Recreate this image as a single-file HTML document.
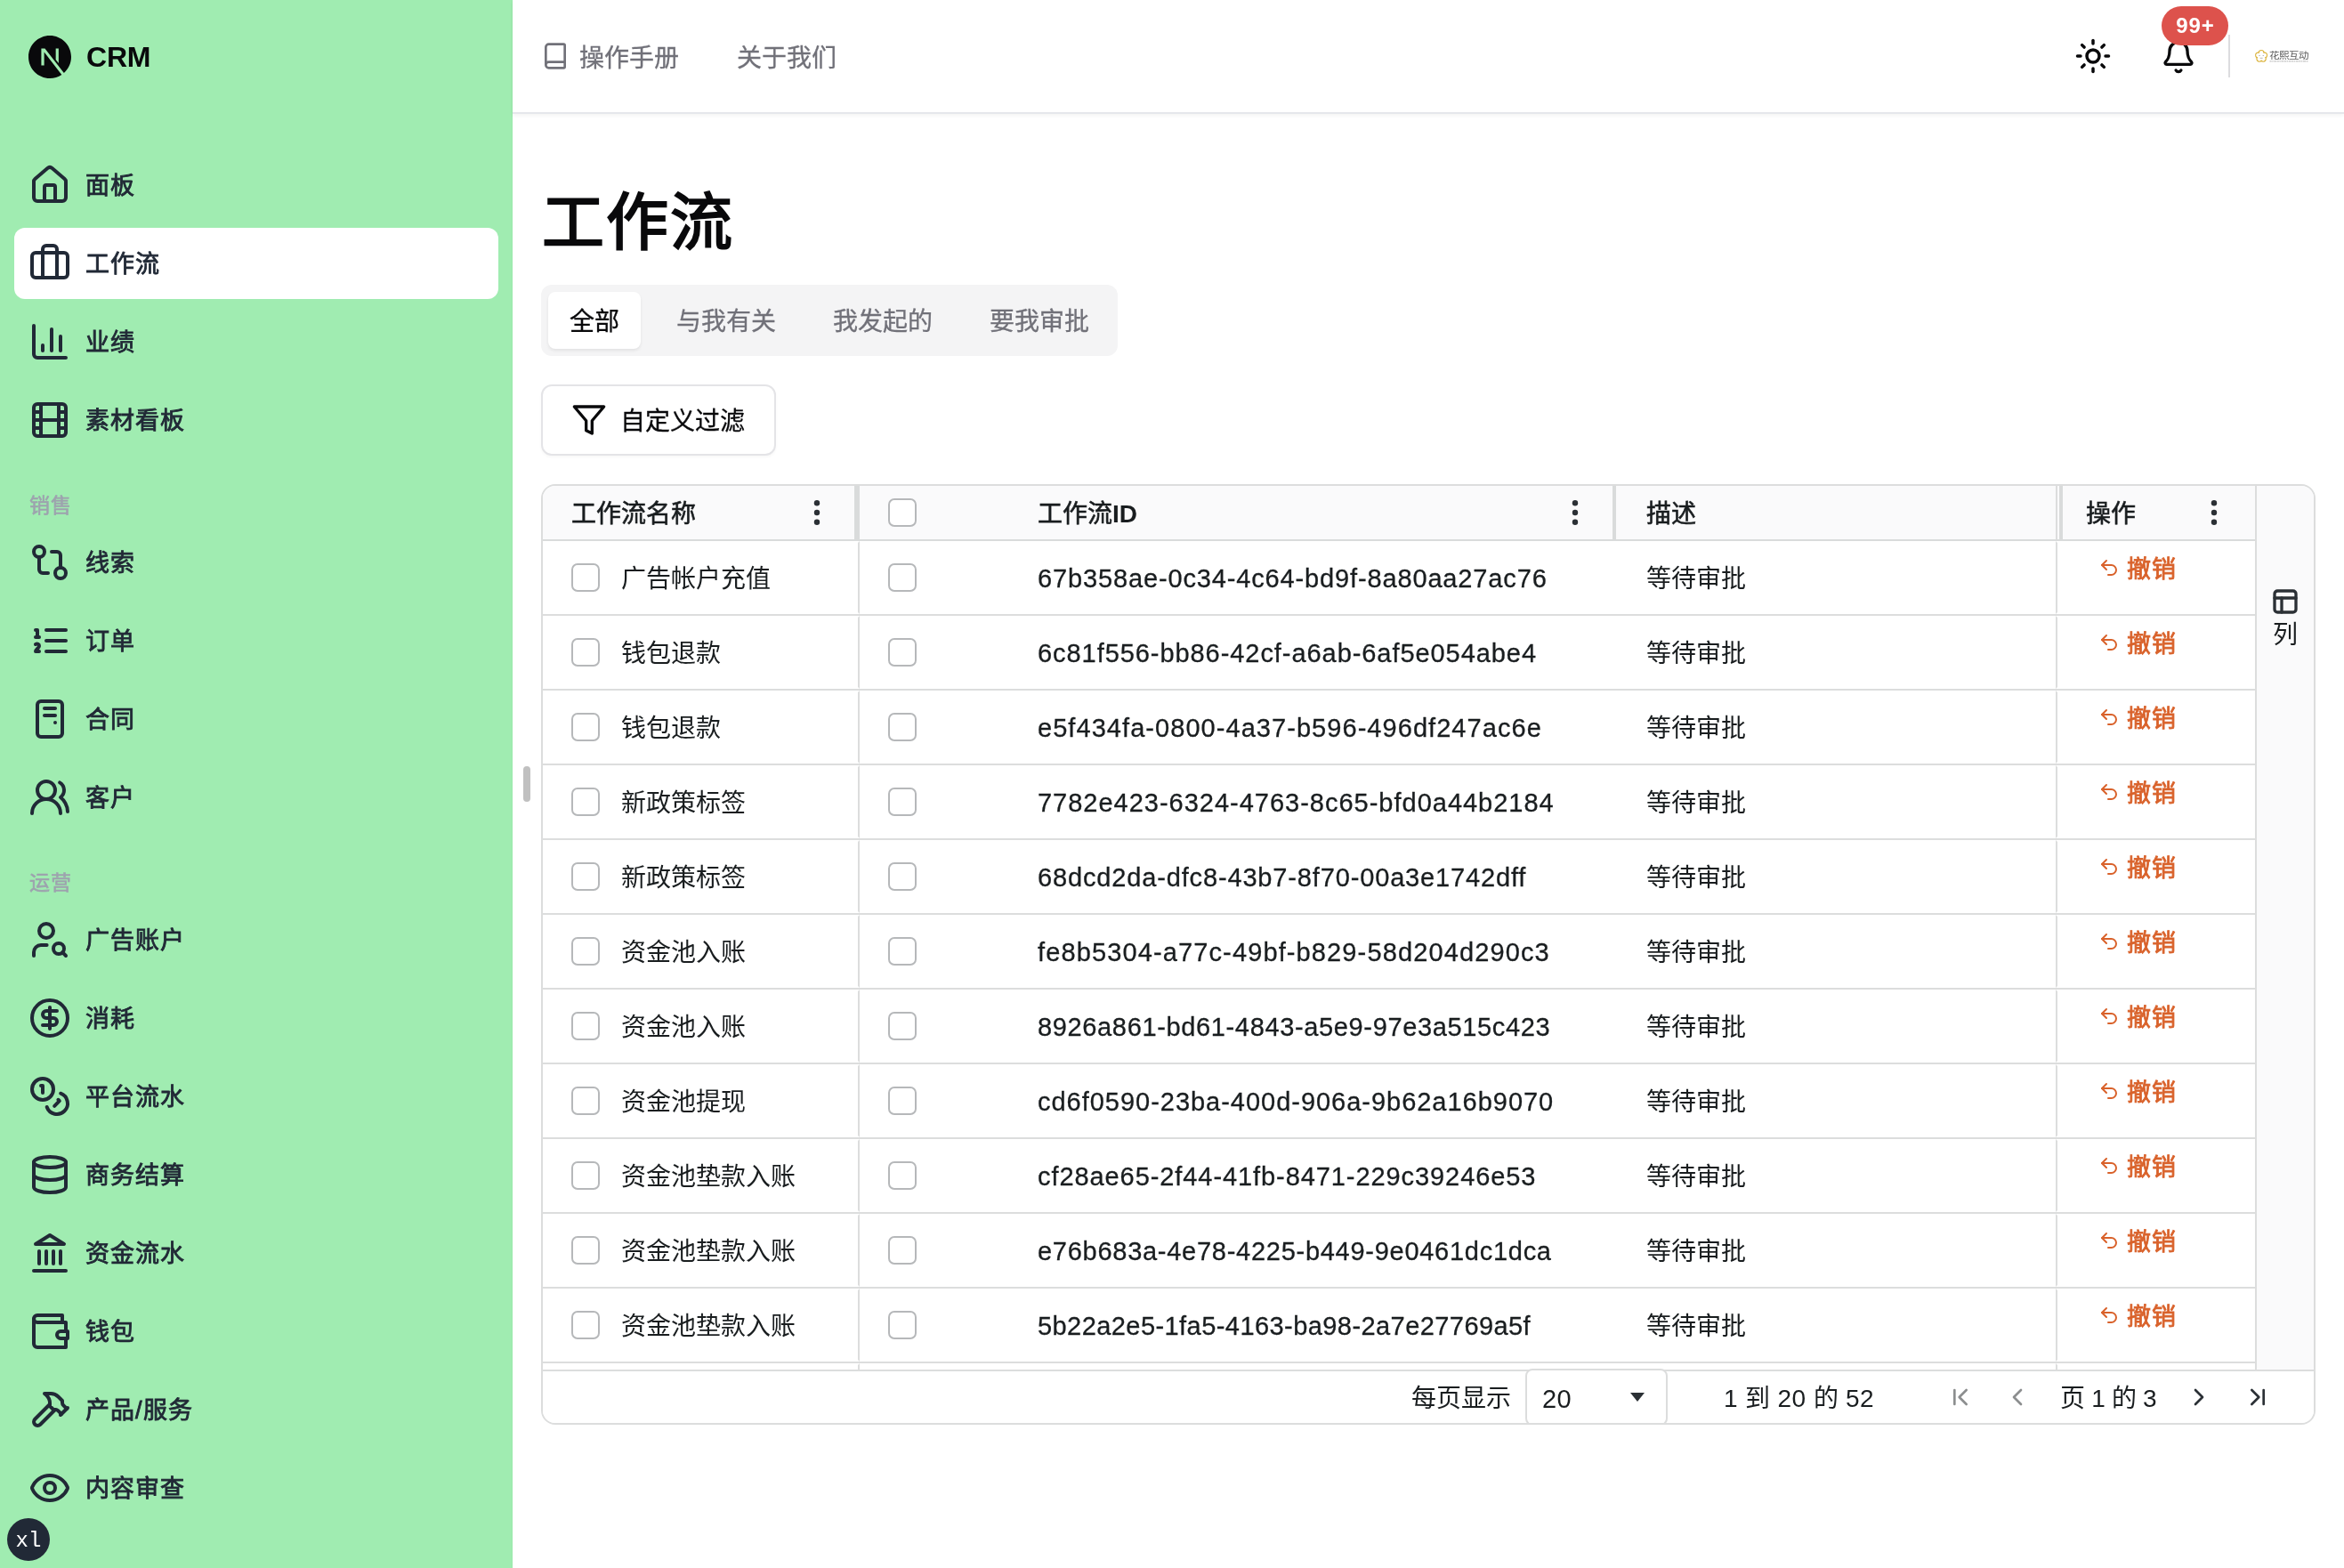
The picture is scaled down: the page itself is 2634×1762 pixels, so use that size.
<!DOCTYPE html>
<html lang="zh-CN">
<head>
<meta charset="utf-8">
<title>工作流 - CRM</title>
<style>
*{box-sizing:border-box}
html,body{margin:0;padding:0}
body{width:2634px;height:1762px;overflow:hidden;background:#fff;position:relative;
 font-family:"Liberation Sans",sans-serif;color:#09090b;-webkit-font-smoothing:antialiased}
svg.ic{display:block;flex:none}
a{color:inherit;text-decoration:none}
button{font:inherit;color:inherit;background:none;border:0;padding:0;margin:0;text-align:left;letter-spacing:inherit}
h1{margin:0}
#side,#top,#title,#tabs,#fbtn,#grid{will-change:transform}
/* ---------- sidebar ---------- */
#side{position:absolute;left:0;top:0;width:576px;height:1762px;background:#a0ecb1;color:#212936;box-shadow:inset -1px 0 0 #9aeaab}
#brand{position:absolute;left:32px;top:40px;height:48px;display:flex;align-items:center}
#brand .t{margin-left:17px;font-weight:700;font-size:32px;color:#09090b;letter-spacing:-.2px;line-height:48px}
#nav{position:absolute;left:16px;top:168px;width:544px}
.ni{height:80px;margin-bottom:8px;border-radius:12px;padding-left:16px;display:flex;align-items:center;
 font-size:27px;letter-spacing:1px;font-weight:500;-webkit-text-stroke:.85px currentColor;line-height:48px}
.ni.act{background:#fff}
.ni span{margin-left:16px;position:relative;top:1px}
.sec{height:32px;line-height:32px;margin:39px 0 9px 17px;padding-top:1px;font-size:23px;letter-spacing:1px;font-weight:400;-webkit-text-stroke:.6px currentColor;color:#9da3ae}
#xl{position:absolute;left:8px;top:1706px;width:48px;height:48px;border-radius:50%;background:#212936;color:#fff;
 font-family:"Liberation Mono",monospace;font-size:24px;line-height:48px;padding-top:2px;text-align:center}
#grip{position:absolute;left:588px;top:861px;width:8px;height:40px;border-radius:4px;background:#c0c0c0}
/* ---------- topbar ---------- */
#top{position:absolute;left:576px;top:0;width:2058px;height:128px;background:#fff;border-bottom:2px solid #e5e7eb;
 box-shadow:0 2px 4px rgba(0,0,0,.05)}
.tl{position:absolute;top:42px;height:48px;line-height:48px;font-size:28px;font-weight:400;-webkit-text-stroke:.3px currentColor;color:#717179;display:flex;align-items:center}

#book{position:absolute;left:32px;top:47px;color:#717179}
#sun{position:absolute;left:1755px;top:42px;color:#09090b}
#bell{position:absolute;left:1852px;top:44px;color:#09090b}
#badge{position:absolute;left:1853px;top:7px;width:75px;height:44px;border-radius:22px;background:#dd524c;color:#fff;
 font-size:24px;font-weight:700;line-height:44px;text-align:center;letter-spacing:1px;padding-left:1px}
#vsep{position:absolute;left:1928px;top:39px;width:2px;height:48px;background:#dcdcdf}
#logo{position:absolute;left:1954px;top:50px;width:70px;height:26px}
/* ---------- page ---------- */
#title{position:absolute;left:609px;top:199px;height:104px;line-height:104px;font-size:70px;letter-spacing:2px;font-weight:700;color:#09090b;white-space:nowrap}
#tabs{position:absolute;left:608px;top:320px;width:648px;height:80px;border-radius:12px;background:#f4f4f5}
.tab{position:absolute;top:8px;height:64px;padding-top:4px;line-height:60px;font-size:28px;font-weight:400;-webkit-text-stroke:.3px currentColor;color:#717179;text-align:center;border-radius:8px;white-space:nowrap}
.tab.on{background:#fff;color:#09090b;box-shadow:0 2px 4px rgba(0,0,0,.05),0 2px 3px rgba(0,0,0,.03)}
#fbtn{position:absolute;left:608px;top:432px;width:264px;height:80px;border:2px solid #e4e4e7;border-radius:12px;background:#fff;
 box-shadow:0 2px 3px rgba(0,0,0,.03)}
#fbtn svg{position:absolute;left:32px;top:18px}
#fbtn span{position:absolute;left:87px;top:2px;line-height:76px;font-size:28px;font-weight:400;-webkit-text-stroke:.3px currentColor;white-space:nowrap}
/* ---------- grid ---------- */
#grid{position:absolute;left:608px;top:544px;width:1994px;height:1057px;border:2px solid #dcdddd;border-radius:16px;overflow:hidden;background:#fff;color:#191d1f;font-size:28px}
#gh{position:absolute;left:0;top:0;width:1924px;height:62px;background:#fafafb;border-bottom:2px solid #d9dbdb;font-weight:400;-webkit-text-stroke:.6px currentColor;white-space:nowrap}
#gh .ht{position:absolute;top:2px;line-height:60px}
.bar{position:absolute;top:0;height:60px;background:#d9dbdb}
.dots{position:absolute;top:14px;width:32px;height:32px;color:#2b3035}
.cb{position:absolute;width:32px;height:32px;border:2px solid #b6b8ba;border-radius:7px;background:#fff}
.row{position:absolute;left:0;width:1924px;height:84px;border-bottom:2px solid #dcdddd;white-space:nowrap}
.row .c{position:absolute;top:0;height:82px;border:2px solid transparent}
.row .c1{left:0;width:356px;border-right-color:#dcdddd}
.row .c3{left:1700px;width:224px;border-left-color:#dcdddd}
.row .t{position:absolute;top:2px;line-height:82px}
.row .id{top:1px;font-size:29px;letter-spacing:.9px;-webkit-text-stroke:.3px currentColor}
.undo{position:absolute;left:1748px;top:18px;color:#d9622b}
.undo svg{position:absolute;left:0;top:0}
.undo span{position:absolute;left:32px;top:-10px;line-height:48px;font-weight:400;-webkit-text-stroke:.85px currentColor;font-size:27px;letter-spacing:1px}
#gs{position:absolute;left:1924px;top:0;width:66px;height:993px;background:#fafafb;border-left:2px solid #dcdddd}
#gs svg{position:absolute;left:16px;top:114px;color:#2b3035}
#gs span{position:absolute;left:0;width:64px;top:148px;line-height:40px;text-align:center;font-size:28px}
#gp{position:absolute;left:0;top:993px;width:1990px;height:60px;border-top:2px solid #dcdddd;background:#fff;white-space:nowrap}
#gp .pt{position:absolute;top:1px;line-height:60px}
#sel{position:absolute;left:1104px;top:-3px;width:160px;height:64px;border:2px solid #dcdddd;border-radius:8px;background:#fff}
#car{position:absolute;left:1221.5px;top:23.500px;width:0;height:0;border-left:8.500px solid transparent;border-right:8.500px solid transparent;border-top:10.500px solid #2b3035}
.pi{position:absolute;top:13px;width:32px;height:32px}
</style>
</head>
<body>
<aside id="side">
<div id="brand"><svg width="48" height="48" viewBox="0 0 24 24" style="display:block"><path fill="#09090b" d="M18.665 21.978C16.758 23.255 14.465 24 12 24 5.377 24 0 18.623 0 12S5.377 0 12 0s12 5.377 12 12c0 3.583-1.574 6.801-4.067 9.001L9.219 7.2H7.2v9.596h1.615V9.251l9.85 12.727Zm-3.332-8.533 1.6 2.061V7.2h-1.6v6.245Z"/></svg><div class="t">CRM</div></div>
<nav id="nav">
<a href="#" class="ni"><svg class="ic " width="48" height="48" viewBox="0 0 24 24" fill="none" stroke="currentColor" stroke-width="2" stroke-linecap="round" stroke-linejoin="round" style=""><path d="M15 21v-8a1 1 0 0 0-1-1h-4a1 1 0 0 0-1 1v8"/><path d="M3 10a2 2 0 0 1 .709-1.528l7-5.999a2 2 0 0 1 2.582 0l7 5.999A2 2 0 0 1 21 10v9a2 2 0 0 1-2 2H5a2 2 0 0 1-2-2z"/></svg><span>面板</span></a>
<a href="#" class="ni act"><svg class="ic " width="48" height="48" viewBox="0 0 24 24" fill="none" stroke="currentColor" stroke-width="2" stroke-linecap="round" stroke-linejoin="round" style=""><path d="M16 20V4a2 2 0 0 0-2-2h-4a2 2 0 0 0-2 2v16"/><rect width="20" height="14" x="2" y="6" rx="2"/></svg><span>工作流</span></a>
<a href="#" class="ni"><svg class="ic " width="48" height="48" viewBox="0 0 24 24" fill="none" stroke="currentColor" stroke-width="2" stroke-linecap="round" stroke-linejoin="round" style=""><path d="M3 3v16a2 2 0 0 0 2 2h16"/><path d="M18 17V9"/><path d="M13 17V5"/><path d="M8 17v-3"/></svg><span>业绩</span></a>
<a href="#" class="ni"><svg class="ic " width="48" height="48" viewBox="0 0 24 24" fill="none" stroke="currentColor" stroke-width="2" stroke-linecap="round" stroke-linejoin="round" style=""><rect width="18" height="18" x="3" y="3" rx="2"/><path d="M7 3v18"/><path d="M3 7.5h4"/><path d="M3 12h18"/><path d="M3 16.5h4"/><path d="M17 3v18"/><path d="M17 7.5h4"/><path d="M17 16.5h4"/></svg><span>素材看板</span></a>
<div class="sec">销售</div>
<a href="#" class="ni"><svg class="ic " width="48" height="48" viewBox="0 0 24 24" fill="none" stroke="currentColor" stroke-width="2" stroke-linecap="round" stroke-linejoin="round" style=""><circle cx="18" cy="18" r="3"/><circle cx="6" cy="6" r="3"/><path d="M13 6h3a2 2 0 0 1 2 2v7"/><path d="M11 18H8a2 2 0 0 1-2-2V9"/></svg><span>线索</span></a>
<a href="#" class="ni"><svg class="ic " width="48" height="48" viewBox="0 0 24 24" fill="none" stroke="currentColor" stroke-width="2" stroke-linecap="round" stroke-linejoin="round" style=""><line x1="10" x2="21" y1="6" y2="6"/><line x1="10" x2="21" y1="12" y2="12"/><line x1="10" x2="21" y1="18" y2="18"/><path d="M4 6h1v4"/><path d="M4 10h2"/><path d="M6 18H4c0-1 2-2 2-3s-1-1.5-2-1"/></svg><span>订单</span></a>
<a href="#" class="ni"><svg class="ic " width="48" height="48" viewBox="0 0 24 24" fill="none" stroke="currentColor" stroke-width="2" stroke-linecap="round" stroke-linejoin="round" style=""><rect width="14" height="20" x="5" y="2" rx="2"/><path d="M15 14h.01"/><path d="M9 6h6"/><path d="M9 10h6"/></svg><span>合同</span></a>
<a href="#" class="ni"><svg class="ic " width="48" height="48" viewBox="0 0 24 24" fill="none" stroke="currentColor" stroke-width="2" stroke-linecap="round" stroke-linejoin="round" style=""><path d="M18 21a8 8 0 0 0-16 0"/><circle cx="10" cy="8" r="5"/><path d="M22 20c0-3.37-2-6.5-4-8a5 5 0 0 0-.45-8.3"/></svg><span>客户</span></a>
<div class="sec">运营</div>
<a href="#" class="ni"><svg class="ic " width="48" height="48" viewBox="0 0 24 24" fill="none" stroke="currentColor" stroke-width="2" stroke-linecap="round" stroke-linejoin="round" style=""><circle cx="10" cy="7" r="4"/><path d="M10.3 15H7a4 4 0 0 0-4 4v2"/><circle cx="17" cy="17" r="3"/><path d="m21 21-1.9-1.9"/></svg><span>广告账户</span></a>
<a href="#" class="ni"><svg class="ic " width="48" height="48" viewBox="0 0 24 24" fill="none" stroke="currentColor" stroke-width="2" stroke-linecap="round" stroke-linejoin="round" style=""><circle cx="12" cy="12" r="10"/><path d="M16 8h-6a2 2 0 1 0 0 4h4a2 2 0 1 1 0 4H8"/><path d="M12 18V6"/></svg><span>消耗</span></a>
<a href="#" class="ni"><svg class="ic " width="48" height="48" viewBox="0 0 24 24" fill="none" stroke="currentColor" stroke-width="2" stroke-linecap="round" stroke-linejoin="round" style=""><circle cx="8" cy="8" r="6"/><path d="M18.09 10.37A6 6 0 1 1 10.34 18"/><path d="M7 6h1v4"/><path d="m16.71 13.88.7.71-2.82 2.82"/></svg><span>平台流水</span></a>
<a href="#" class="ni"><svg class="ic " width="48" height="48" viewBox="0 0 24 24" fill="none" stroke="currentColor" stroke-width="2" stroke-linecap="round" stroke-linejoin="round" style=""><ellipse cx="12" cy="5" rx="9" ry="3"/><path d="M3 5V19A9 3 0 0 0 21 19V5"/><path d="M3 12A9 3 0 0 0 21 12"/></svg><span>商务结算</span></a>
<a href="#" class="ni"><svg class="ic " width="48" height="48" viewBox="0 0 24 24" fill="none" stroke="currentColor" stroke-width="2" stroke-linecap="round" stroke-linejoin="round" style=""><line x1="3" x2="21" y1="22" y2="22"/><line x1="6" x2="6" y1="18" y2="11"/><line x1="10" x2="10" y1="18" y2="11"/><line x1="14" x2="14" y1="18" y2="11"/><line x1="18" x2="18" y1="18" y2="11"/><polygon points="12 2 20 7 4 7"/></svg><span>资金流水</span></a>
<a href="#" class="ni"><svg class="ic " width="48" height="48" viewBox="0 0 24 24" fill="none" stroke="currentColor" stroke-width="2" stroke-linecap="round" stroke-linejoin="round" style=""><path d="M21 12V7H5a2 2 0 0 1 0-4h14v4"/><path d="M3 5v14a2 2 0 0 0 2 2h16v-5"/><path d="M18 12a2 2 0 0 0 0 4h4v-4Z"/></svg><span>钱包</span></a>
<a href="#" class="ni"><svg class="ic " width="48" height="48" viewBox="0 0 24 24" fill="none" stroke="currentColor" stroke-width="2" stroke-linecap="round" stroke-linejoin="round" style=""><path d="m15 12-8.373 8.373a1 1 0 1 1-3-3L12 9"/><path d="m18 15 4-4"/><path d="m21.5 11.5-1.914-1.914A2 2 0 0 1 19 8.172V7l-2.26-2.26a6 6 0 0 0-4.202-1.756L9 2.96l.92.82A6.18 6.18 0 0 1 12 8.4V10l2 2h1.172a2 2 0 0 1 1.414.586L18.5 14.5"/></svg><span>产品/服务</span></a>
<a href="#" class="ni"><svg class="ic " width="48" height="48" viewBox="0 0 24 24" fill="none" stroke="currentColor" stroke-width="2" stroke-linecap="round" stroke-linejoin="round" style=""><path d="M2.062 12.348a1 1 0 0 1 0-.696 10.75 10.75 0 0 1 19.876 0 1 1 0 0 1 0 .696 10.75 10.75 0 0 1-19.876 0"/><circle cx="12" cy="12" r="3"/></svg><span>内容审查</span></a>
</nav>
<div id="xl">xl</div>
</aside>
<header id="top">
<svg id="book" class="ic" width="32" height="32" viewBox="0 0 24 24" fill="none" stroke="currentColor" stroke-width="2" stroke-linecap="round" stroke-linejoin="round" style=""><path d="M4 19.5v-15A2.5 2.5 0 0 1 6.5 2H19a1 1 0 0 1 1 1v18a1 1 0 0 1-1 1H6.5a1 1 0 0 1 0-5H20"/></svg>
<a href="#" class="tl" style="left:75px">操作手册</a>
<a href="#" class="tl" style="left:252px">关于我们</a>
<svg id="sun" class="ic" width="42" height="42" viewBox="0 0 24 24" fill="none" stroke="currentColor" stroke-width="2" stroke-linecap="round" stroke-linejoin="round" style=""><circle cx="12" cy="12" r="4"/><path d="M12 2v2"/><path d="M12 20v2"/><path d="m4.93 4.93 1.41 1.41"/><path d="m17.66 17.66 1.41 1.41"/><path d="M2 12h2"/><path d="M20 12h2"/><path d="m6.34 17.66-1.41 1.41"/><path d="m19.07 4.93-1.41 1.41"/></svg>
<svg id="bell" class="ic" width="40" height="40" viewBox="0 0 24 24" fill="none" stroke="currentColor" stroke-width="2" stroke-linecap="round" stroke-linejoin="round" style=""><path d="M10.268 21a2 2 0 0 0 3.464 0"/><path d="M3.262 15.326A1 1 0 0 0 4 17h16a1 1 0 0 0 .74-1.673C19.41 13.956 18 12.499 18 8A6 6 0 0 0 6 8c0 4.499-1.411 5.956-2.738 7.326"/></svg>
<div id="badge">99+</div>
<div id="vsep"></div>
<svg id="logo" viewBox="0 0 70 26"><circle cx="11.10" cy="9.65" r="3.00" fill="none" stroke="#dcb540" stroke-width="1.3"/><circle cx="14.48" cy="12.10" r="3.00" fill="none" stroke="#dcb540" stroke-width="1.3"/><circle cx="13.19" cy="16.07" r="3.00" fill="none" stroke="#dcb540" stroke-width="1.3"/><circle cx="9.01" cy="16.07" r="3.00" fill="none" stroke="#dcb540" stroke-width="1.3"/><circle cx="7.72" cy="12.10" r="3.00" fill="none" stroke="#dcb540" stroke-width="1.3"/><circle cx="11.10" cy="9.65" r="2.38" fill="#fff"/><circle cx="14.48" cy="12.10" r="2.38" fill="#fff"/><circle cx="13.19" cy="16.07" r="2.38" fill="#fff"/><circle cx="9.01" cy="16.07" r="2.38" fill="#fff"/><circle cx="7.72" cy="12.10" r="2.38" fill="#fff"/><circle cx="11.10" cy="13.20" r="3.600" fill="#fff"/><circle cx="9.00" cy="12.50" r=".600" fill="#8a8a8a"/><circle cx="13.20" cy="12.50" r=".600" fill="#8a8a8a"/><path d="M9.60 15.30h3" stroke="#9a9a9a" stroke-width=".7" fill="none"/><text x="19.800" y="16.300" font-family="Liberation Sans, sans-serif" font-size="10.400" fill="#5a5a5a" textLength="44.500" lengthAdjust="spacingAndGlyphs">花熙互动</text><path d="M20.500 18.900h43" stroke="#c4c4c4" stroke-width="1.300" stroke-dasharray="2.200 .5 1.400 .6 3 .5" fill="none"/></svg>
</header>
<div id="grip"></div>
<h1 id="title">工作流</h1>
<div id="tabs" role="tablist"><button role="tab" class="tab on" style="left:8px;width:104px">全部</button><button role="tab" class="tab" style="left:128px;width:160px">与我有关</button><button role="tab" class="tab" style="left:304px;width:160px">我发起的</button><button role="tab" class="tab" style="left:480px;width:160px">要我审批</button></div>
<button id="fbtn"><svg class="ic " width="40" height="40" viewBox="0 0 24 24" fill="none" stroke="currentColor" stroke-width="2" stroke-linecap="round" stroke-linejoin="round" style=""><polygon points="22 3 2 3 10 12.46 10 19 14 21 14 12.46 22 3"/></svg><span>自定义过滤</span></button>
<div id="grid" role="grid">
<div id="gh" role="row"><div class="ht" style="left:32px">工作流名称</div><svg class="dots" style="left:292px" viewBox="0 0 32 32"><circle cx="16" cy="5.2" r="3.2" fill="currentColor"/><circle cx="16" cy="16" r="3.2" fill="currentColor"/><circle cx="16" cy="26.8" r="3.2" fill="currentColor"/></svg><div class="bar" style="left:350px;width:6px"></div><div class="cb" style="left:388px;top:14px"></div><div class="ht" style="left:556px">工作流<span style="font-weight:700;-webkit-text-stroke:0">ID</span></div><svg class="dots" style="left:1144px" viewBox="0 0 32 32"><circle cx="16" cy="5.2" r="3.2" fill="currentColor"/><circle cx="16" cy="16" r="3.2" fill="currentColor"/><circle cx="16" cy="26.8" r="3.2" fill="currentColor"/></svg><div class="bar" style="left:1202px;width:4px"></div><div class="ht" style="left:1240px">描述</div><div class="bar" style="left:1700px;width:2px;background:#dcdddd"></div><div class="bar" style="left:1704px;width:4px"></div><div class="ht" style="left:1734px">操作</div><svg class="dots" style="left:1862px" viewBox="0 0 32 32"><circle cx="16" cy="5.2" r="3.2" fill="currentColor"/><circle cx="16" cy="16" r="3.2" fill="currentColor"/><circle cx="16" cy="26.8" r="3.2" fill="currentColor"/></svg></div>
<div class="row" role="row" style="top:62px"><div class="c c1"></div><div class="c c3"></div><div class="cb" style="left:32px;top:25px"></div><div class="t" style="left:88px">广告帐户充值</div><div class="cb" style="left:388px;top:25px"></div><div class="t id" style="left:556px;letter-spacing:0.857px">67b358ae-0c34-4c64-bd9f-8a80aa27ac76</div><div class="t" style="left:1240px">等待审批</div><button class="undo"><svg class="ic " width="24" height="24" viewBox="0 0 24 24" fill="none" stroke="currentColor" stroke-width="2" stroke-linecap="round" stroke-linejoin="round" style=""><path d="M9 14 4 9l5-5"/><path d="M4 9h10.5a5.5 5.5 0 0 1 5.5 5.5a5.5 5.5 0 0 1-5.5 5.5H11"/></svg><span>撤销</span></button></div>
<div class="row" role="row" style="top:146px"><div class="c c1"></div><div class="c c3"></div><div class="cb" style="left:32px;top:25px"></div><div class="t" style="left:88px">钱包退款</div><div class="cb" style="left:388px;top:25px"></div><div class="t id" style="left:556px;letter-spacing:0.937px">6c81f556-bb86-42cf-a6ab-6af5e054abe4</div><div class="t" style="left:1240px">等待审批</div><button class="undo"><svg class="ic " width="24" height="24" viewBox="0 0 24 24" fill="none" stroke="currentColor" stroke-width="2" stroke-linecap="round" stroke-linejoin="round" style=""><path d="M9 14 4 9l5-5"/><path d="M4 9h10.5a5.5 5.5 0 0 1 5.5 5.5a5.5 5.5 0 0 1-5.5 5.5H11"/></svg><span>撤销</span></button></div>
<div class="row" role="row" style="top:230px"><div class="c c1"></div><div class="c c3"></div><div class="cb" style="left:32px;top:25px"></div><div class="t" style="left:88px">钱包退款</div><div class="cb" style="left:388px;top:25px"></div><div class="t id" style="left:556px;letter-spacing:1.054px">e5f434fa-0800-4a37-b596-496df247ac6e</div><div class="t" style="left:1240px">等待审批</div><button class="undo"><svg class="ic " width="24" height="24" viewBox="0 0 24 24" fill="none" stroke="currentColor" stroke-width="2" stroke-linecap="round" stroke-linejoin="round" style=""><path d="M9 14 4 9l5-5"/><path d="M4 9h10.5a5.5 5.5 0 0 1 5.5 5.5a5.5 5.5 0 0 1-5.5 5.5H11"/></svg><span>撤销</span></button></div>
<div class="row" role="row" style="top:314px"><div class="c c1"></div><div class="c c3"></div><div class="cb" style="left:32px;top:25px"></div><div class="t" style="left:88px">新政策标签</div><div class="cb" style="left:388px;top:25px"></div><div class="t id" style="left:556px;letter-spacing:0.991px">7782e423-6324-4763-8c65-bfd0a44b2184</div><div class="t" style="left:1240px">等待审批</div><button class="undo"><svg class="ic " width="24" height="24" viewBox="0 0 24 24" fill="none" stroke="currentColor" stroke-width="2" stroke-linecap="round" stroke-linejoin="round" style=""><path d="M9 14 4 9l5-5"/><path d="M4 9h10.5a5.5 5.5 0 0 1 5.5 5.5a5.5 5.5 0 0 1-5.5 5.5H11"/></svg><span>撤销</span></button></div>
<div class="row" role="row" style="top:398px"><div class="c c1"></div><div class="c c3"></div><div class="cb" style="left:32px;top:25px"></div><div class="t" style="left:88px">新政策标签</div><div class="cb" style="left:388px;top:25px"></div><div class="t id" style="left:556px;letter-spacing:0.849px">68dcd2da-dfc8-43b7-8f70-00a3e1742dff</div><div class="t" style="left:1240px">等待审批</div><button class="undo"><svg class="ic " width="24" height="24" viewBox="0 0 24 24" fill="none" stroke="currentColor" stroke-width="2" stroke-linecap="round" stroke-linejoin="round" style=""><path d="M9 14 4 9l5-5"/><path d="M4 9h10.5a5.5 5.5 0 0 1 5.5 5.5a5.5 5.5 0 0 1-5.5 5.5H11"/></svg><span>撤销</span></button></div>
<div class="row" role="row" style="top:482px"><div class="c c1"></div><div class="c c3"></div><div class="cb" style="left:32px;top:25px"></div><div class="t" style="left:88px">资金池入账</div><div class="cb" style="left:388px;top:25px"></div><div class="t id" style="left:556px;letter-spacing:1.123px">fe8b5304-a77c-49bf-b829-58d204d290c3</div><div class="t" style="left:1240px">等待审批</div><button class="undo"><svg class="ic " width="24" height="24" viewBox="0 0 24 24" fill="none" stroke="currentColor" stroke-width="2" stroke-linecap="round" stroke-linejoin="round" style=""><path d="M9 14 4 9l5-5"/><path d="M4 9h10.5a5.5 5.5 0 0 1 5.5 5.5a5.5 5.5 0 0 1-5.5 5.5H11"/></svg><span>撤销</span></button></div>
<div class="row" role="row" style="top:566px"><div class="c c1"></div><div class="c c3"></div><div class="cb" style="left:32px;top:25px"></div><div class="t" style="left:88px">资金池入账</div><div class="cb" style="left:388px;top:25px"></div><div class="t id" style="left:556px;letter-spacing:0.643px">8926a861-bd61-4843-a5e9-97e3a515c423</div><div class="t" style="left:1240px">等待审批</div><button class="undo"><svg class="ic " width="24" height="24" viewBox="0 0 24 24" fill="none" stroke="currentColor" stroke-width="2" stroke-linecap="round" stroke-linejoin="round" style=""><path d="M9 14 4 9l5-5"/><path d="M4 9h10.5a5.5 5.5 0 0 1 5.5 5.5a5.5 5.5 0 0 1-5.5 5.5H11"/></svg><span>撤销</span></button></div>
<div class="row" role="row" style="top:650px"><div class="c c1"></div><div class="c c3"></div><div class="cb" style="left:32px;top:25px"></div><div class="t" style="left:88px">资金池提现</div><div class="cb" style="left:388px;top:25px"></div><div class="t id" style="left:556px;letter-spacing:0.977px">cd6f0590-23ba-400d-906a-9b62a16b9070</div><div class="t" style="left:1240px">等待审批</div><button class="undo"><svg class="ic " width="24" height="24" viewBox="0 0 24 24" fill="none" stroke="currentColor" stroke-width="2" stroke-linecap="round" stroke-linejoin="round" style=""><path d="M9 14 4 9l5-5"/><path d="M4 9h10.5a5.5 5.5 0 0 1 5.5 5.5a5.5 5.5 0 0 1-5.5 5.5H11"/></svg><span>撤销</span></button></div>
<div class="row" role="row" style="top:734px"><div class="c c1"></div><div class="c c3"></div><div class="cb" style="left:32px;top:25px"></div><div class="t" style="left:88px">资金池垫款入账</div><div class="cb" style="left:388px;top:25px"></div><div class="t id" style="left:556px;letter-spacing:0.920px">cf28ae65-2f44-41fb-8471-229c39246e53</div><div class="t" style="left:1240px">等待审批</div><button class="undo"><svg class="ic " width="24" height="24" viewBox="0 0 24 24" fill="none" stroke="currentColor" stroke-width="2" stroke-linecap="round" stroke-linejoin="round" style=""><path d="M9 14 4 9l5-5"/><path d="M4 9h10.5a5.5 5.5 0 0 1 5.5 5.5a5.5 5.5 0 0 1-5.5 5.5H11"/></svg><span>撤销</span></button></div>
<div class="row" role="row" style="top:818px"><div class="c c1"></div><div class="c c3"></div><div class="cb" style="left:32px;top:25px"></div><div class="t" style="left:88px">资金池垫款入账</div><div class="cb" style="left:388px;top:25px"></div><div class="t id" style="left:556px;letter-spacing:0.729px">e76b683a-4e78-4225-b449-9e0461dc1dca</div><div class="t" style="left:1240px">等待审批</div><button class="undo"><svg class="ic " width="24" height="24" viewBox="0 0 24 24" fill="none" stroke="currentColor" stroke-width="2" stroke-linecap="round" stroke-linejoin="round" style=""><path d="M9 14 4 9l5-5"/><path d="M4 9h10.5a5.5 5.5 0 0 1 5.5 5.5a5.5 5.5 0 0 1-5.5 5.5H11"/></svg><span>撤销</span></button></div>
<div class="row" role="row" style="top:902px"><div class="c c1"></div><div class="c c3"></div><div class="cb" style="left:32px;top:25px"></div><div class="t" style="left:88px">资金池垫款入账</div><div class="cb" style="left:388px;top:25px"></div><div class="t id" style="left:556px;letter-spacing:0.431px">5b22a2e5-1fa5-4163-ba98-2a7e27769a5f</div><div class="t" style="left:1240px">等待审批</div><button class="undo"><svg class="ic " width="24" height="24" viewBox="0 0 24 24" fill="none" stroke="currentColor" stroke-width="2" stroke-linecap="round" stroke-linejoin="round" style=""><path d="M9 14 4 9l5-5"/><path d="M4 9h10.5a5.5 5.5 0 0 1 5.5 5.5a5.5 5.5 0 0 1-5.5 5.5H11"/></svg><span>撤销</span></button></div>
<div class="row" role="row" style="top:986px"><div class="c c1"></div><div class="c c3"></div></div>
<div id="gs"><svg class="ic " width="32" height="32" viewBox="0 0 24 24" fill="none" stroke="currentColor" stroke-width="2.5" stroke-linecap="round" stroke-linejoin="round" style=""><rect width="18" height="18" x="3" y="3" rx="2.5"/><path d="M3 9h18"/><path d="M9 9v12"/></svg><span>列</span></div>
<div id="gp"><div class="pt" style="left:976px">每页显示</div><div id="sel"></div><div class="pt" style="left:1123px;font-size:29px;letter-spacing:.4px">20</div><div id="car"></div><div class="pt" style="left:1327px;letter-spacing:.35px">1 到 20 的 52</div><svg class="ic pi" width="32" height="32" viewBox="0 0 24 24" fill="none" stroke="currentColor" stroke-width="2" stroke-linecap="round" stroke-linejoin="round" style="left:1577px;color:#8c8e8f"><path d="m17 18-6-6 6-6"/><path d="M7 6v12"/></svg><svg class="ic pi" width="32" height="32" viewBox="0 0 24 24" fill="none" stroke="currentColor" stroke-width="2" stroke-linecap="round" stroke-linejoin="round" style="left:1641px;color:#8c8e8f"><path d="m15 18-6-6 6-6"/></svg><div class="pt" style="left:1705px;letter-spacing:-.3px">页 1 的 3</div><svg class="ic pi" width="32" height="32" viewBox="0 0 24 24" fill="none" stroke="currentColor" stroke-width="2" stroke-linecap="round" stroke-linejoin="round" style="left:1845px;color:#2b3035"><path d="m9 18 6-6-6-6"/></svg><svg class="ic pi" width="32" height="32" viewBox="0 0 24 24" fill="none" stroke="currentColor" stroke-width="2" stroke-linecap="round" stroke-linejoin="round" style="left:1911px;color:#2b3035"><path d="m7 18 6-6-6-6"/><path d="M17 6v12"/></svg></div>
</div>
</body>
</html>
